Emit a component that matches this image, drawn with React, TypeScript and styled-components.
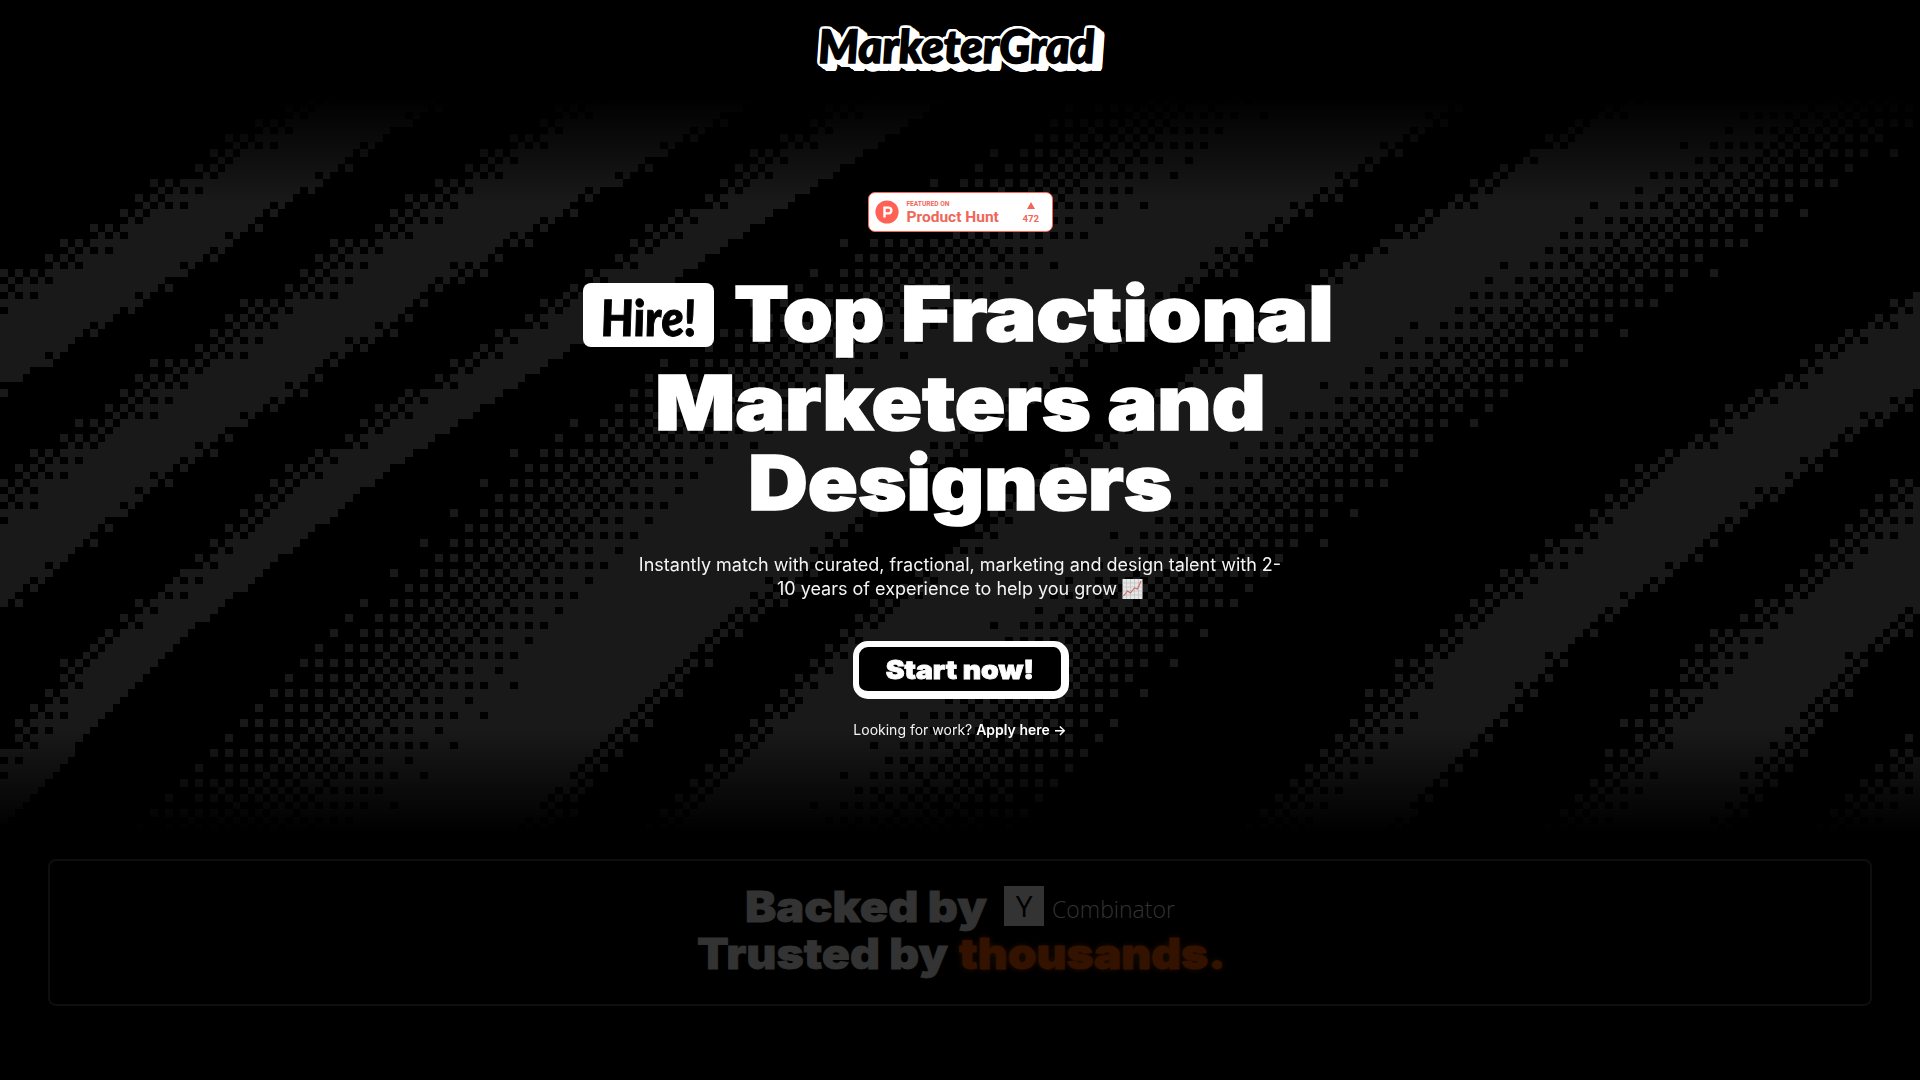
import React, { useLayoutEffect, useRef } from "react";
import styled, { createGlobalStyle } from "styled-components";

const GlobalStyle = createGlobalStyle`
  *, *::before, *::after { box-sizing: border-box; }
  html, body { margin: 0; background: #000; }
  body { color: #fff; font-family: Inter, "Liberation Sans", sans-serif; overflow: hidden; }
`;

/* ---------- dithered backdrop ---------- */

const CELL = 7.5;
const COLS = 256;
const ROWS = 100;
const FIELD_TOP = 88.6;

const BAYER = [
  [0, 8, 2, 10],
  [12, 4, 14, 6],
  [3, 11, 1, 9],
  [15, 7, 13, 5],
];

/* Each band lists, per level, where it starts, becomes solid, stops being solid and ends. */
const LEVELS = [140, 277, 465, 650, 790];
const BANDS: number[][][] = [
  [[217, 288, 361, 395], [-10, 75, 160, 192], [-310, -210, -130, -105], [-600, -500, -420, -390], [-800, -700, -620, -600]],
  [[493, 563, 667, 702], [268, 365, 430, 480], [2, 85, 165, 196], [-200, -130, -65, -35], [-400, -350, -280, -240]],
  [[765, 833, 884, 884], [572, 625, 676, 676], [285, 345, 394, 394], [73, 120, 168, 168], [-50, 5, 36, 36]],
  [[990, 1245, 1382, 1425], [780, 1052, 1171, 1232], [480, 738, 900, 955], [290, 555, 677, 729], [140, 428, 540, 598]],
  [[1533, 1585, 1680, 1925], [1306, 1355, 1465, 1720], [1040, 1092, 1195, 1427], [811, 860, 945, 1200], [678, 728, 808, 1080]],
  [[2150, 2200, 2290, 2330], [1920, 1970, 2060, 2110], [1635, 1687, 1787, 1826], [1395, 1470, 1545, 1578], [1262, 1360, 1415, 1450]],
  [[2400, 2500, 2600, 2650], [2200, 2300, 2400, 2450], [1910, 1985, 2070, 2110], [1688, 1760, 1843, 1898], [1558, 1648, 1725, 1775]],
  [[2700, 2800, 2900, 2950], [2500, 2600, 2700, 2750], [2200, 2280, 2370, 2400], [1995, 2060, 2140, 2180], [1846, 1920, 2010, 2050]],
];

function bandAt(band: number[][], y: number): number[] {
  let i = 0;
  while (i < LEVELS.length - 2 && y > LEVELS[i + 1]) i += 1;
  const t = (y - LEVELS[i]) / (LEVELS[i + 1] - LEVELS[i]);
  return band[i].map((v, k) => v + (band[i + 1][k] - v) * t);
}

function density(x: number, edges: number[]): number {
  const [a, b, c, d] = edges;
  if (x <= a || x >= d) return 0;
  if (x < b) return (x - a) / (b - a);
  if (x > c) return (d - x) / (d - c);
  return 1;
}

const Backdrop = styled.canvas`
  position: absolute;
  top: -7.4px;
  left: 0;
  width: 1920px;
  height: 750px;
  image-rendering: pixelated;
  mask-image: linear-gradient(to bottom, transparent 8px, #000 112px, #000 640px, transparent 744px);
`;

function DitherField() {
  const ref = useRef<HTMLCanvasElement>(null);
  useLayoutEffect(() => {
    const ctx = ref.current?.getContext("2d");
    if (!ctx) return;
    ctx.clearRect(0, 0, COLS, ROWS);
    ctx.fillStyle = "#191919";
    for (let r = 0; r < ROWS; r += 1) {
      const y = FIELD_TOP + (r + 0.5) * CELL;
      const edges = BANDS.map((b) => bandAt(b, y));
      for (let c = 0; c < COLS; c += 1) {
        const x = (c + 0.5) * CELL;
        const v = Math.max(...edges.map((e) => density(x, e)));
        if (v > (BAYER[r % 4][c % 4] + 0.5) / 16) ctx.fillRect(c, r, 1, 1);
      }
    }
  }, []);
  return <Backdrop ref={ref} width={COLS} height={ROWS} />;
}

/* ---------- header ---------- */

const Page = styled.div`
  width: 1920px;
  height: 1080px;
  background: #000;
  display: flex;
  flex-direction: column;
  overflow: hidden;
`;

const Header = styled.header`
  height: 96px;
  display: flex;
  justify-content: center;
  align-items: flex-start;
  padding: 18px 8px 0 0;
`;

const ring = Array.from({ length: 20 }, (_, i) => {
  const a = (i / 20) * Math.PI * 2;
  return [Math.cos(a) * 3.2, Math.sin(a) * 3.2];
});
const extrusion = [0, 1, 2, 3, 4, 5, 6, 7]
  .flatMap((s) => ring.map(([x, y]) => `${(x + s).toFixed(1)}px ${(y + s * 0.75).toFixed(1)}px 0 #fff`))
  .join(", ");

const Wordmark = styled.div`
  font-family: Lato, "Open Sans", sans-serif;
  font-weight: 900;
  font-style: italic;
  font-size: 46px;
  line-height: 56px;
  letter-spacing: 0;
  color: #000;
  -webkit-text-stroke: 1.6px #000;
  text-shadow: ${extrusion};
  white-space: nowrap;
  transform: skewX(3deg);
`;

/* ---------- hero ---------- */

const Hero = styled.main`
  position: relative;
  height: 763px;
  display: flex;
  flex-direction: column;
  align-items: center;
`;

const HuntBadge = styled.a`
  position: relative;
  margin-top: 96px;
  width: 185px;
  height: 40px;
  padding: 0 0 0 6px;
  display: flex;
  align-items: center;
  border: 1px solid #ff6154;
  border-radius: 7px;
  background: #fff;
  color: #f0665a;
  font-family: Roboto, Inter, sans-serif;
  font-weight: 700;
  svg { flex: none; }
`;

const HuntText = styled.div`
  margin: 1px 0 0 8px;
  width: 116px;
  flex: none;
  display: flex;
  flex-direction: column;
`;

const Featured = styled.span`
  font-size: 6.6px;
  line-height: 8px;
  font-weight: 700;
  white-space: nowrap;
`;

const HuntName = styled.span`
  font-size: 15.5px;
  line-height: 18px;
  white-space: nowrap;
`;

const Votes = styled.div`
  display: flex;
  flex-direction: column;
  align-items: center;
  gap: 4px;
  margin-top: 3px;
  font-size: 9.6px;
  line-height: 12px;
`;

const Title = styled.h1`
  position: relative;
  margin: 51px 0 0;
  display: flex;
  flex-direction: column;
  align-items: center;
  font-weight: 900;
  font-size: 76px;
  line-height: 80px;
  -webkit-text-stroke: 1.6px #fff;
`;

const FirstLine = styled.span`
  display: flex;
  align-items: flex-start;
  height: 79px;
  width: 754px;
`;

const HireTag = styled.span`
  flex: none;
  width: 131px;
  height: 64px;
  margin-right: 20px;
  display: flex;
  justify-content: center;
  align-items: center;
  border-radius: 8px;
  background: #fff;
  color: #000;
  font-family: Lato, "Open Sans", sans-serif;
  font-style: italic;
  font-size: 50px;
  line-height: 64px;
  -webkit-text-stroke: 1px #000;
`;

const HireWord = styled.span`
  display: block;
  padding: 4px 2px 0 0;
  transform: scaleX(0.92) skewX(5deg);
`;

const Line = styled.span<{ $stretch: number }>`
  display: block;
  white-space: nowrap;
  transform: scaleX(${(p) => p.$stretch});
`;

const Word = styled(Line)<{ $width: number }>`
  flex: none;
  width: ${(p) => p.$width}px;
  margin-top: -10px;
  transform-origin: left;
`;

const Lead = styled.p`
  position: relative;
  margin: 31px 0 0;
  width: 648px;
  font-size: 18px;
  line-height: 24px;
  text-align: center;
  color: #f4f4f4;
`;

const ChartGlyph = styled.svg`
  width: 21px;
  height: 20px;
  vertical-align: -4px;
`;

const StartButton = styled.button`
  position: relative;
  margin: 40px 0 0 2px;
  width: 216px;
  height: 58px;
  padding: 0;
  border: solid #fff;
  border-width: 6px 8px 8px 6px;
  border-radius: 15px;
  background: #000;
  color: #fff;
  font-family: Inter, sans-serif;
  font-weight: 900;
  font-size: 25.5px;
  line-height: 46px;
  white-space: nowrap;
  display: flex;
  justify-content: center;
  -webkit-text-stroke: 0.8px #fff;
`;

const Apply = styled.p`
  position: relative;
  margin: 21px 0 0;
  font-size: 14px;
  line-height: 20px;
  color: #f4f4f4;
  a { color: #fff; font-weight: 600; }
`;

/* ---------- backers ---------- */

const Backers = styled.section`
  margin: 0 48px;
  height: 147px;
  border: 2px solid #0e0e0e;
  border-radius: 8px;
  display: flex;
  flex-direction: column;
  align-items: center;
  padding-top: 22px;
  color: #333;
  font-weight: 900;
  font-size: 42px;
  line-height: 46px;
`;

const BackersRow = styled.div`
  display: flex;
  align-items: center;
  height: 47px;
  white-space: nowrap;
`;

const Phrase = styled.span<{ $width: number; $stretch: number }>`
  width: ${(p) => p.$width}px;
  transform: scaleX(${(p) => p.$stretch});
  transform-origin: left;
  -webkit-text-stroke: 0.8px currentColor;
`;

const Combinator = styled.span`
  display: flex;
  align-items: center;
  gap: 8px;
  margin-top: -2px;
  font-family: "Open Sans", "Noto Sans", sans-serif;
  font-weight: 300;
  font-size: 23px;
`;

const CombinatorName = styled.span`
  padding-top: 6px;
`;

const YSquare = styled.span`
  width: 40px;
  height: 40px;
  background: #333;
  color: #000;
  display: flex;
  align-items: center;
  justify-content: center;
  font-weight: 400;
  font-size: 30px;
  line-height: 40px;
`;

const Thousands = styled(Phrase)`
  color: #331300;
  text-shadow: 0 0 6px #2a1000;
`;

export default function App() {
  return (
    <Page>
      <GlobalStyle />
      <Header>
        <Wordmark>MarketerGrad</Wordmark>
      </Header>
      <Hero>
        <DitherField />
        <HuntBadge>
          <svg width="24" height="24" viewBox="0 0 24 24">
            <circle cx="12" cy="12" r="11.6" fill="#ff6154" />
            <path d="M9.500 17.500V7.600h4a2.900 2.900 0 0 1 0 5.800H9.500" fill="none" stroke="#fff" strokeWidth="2.400" />
          </svg>
          <HuntText>
            <Featured>FEATURED ON</Featured>
            <HuntName>Product Hunt</HuntName>
          </HuntText>
          <Votes>
            <svg width="8" height="7" viewBox="0 0 8 7">
              <path d="M4 0 8 7H0z" fill="#f0665a" />
            </svg>
            472
          </Votes>
        </HuntBadge>
        <Title>
          <FirstLine>
            <HireTag>
              <HireWord>Hire!</HireWord>
            </HireTag>
            <Word $stretch={1.053} $width={167}>Top</Word>
            <Word $stretch={1.129} $width={400}>Fractional</Word>
          </FirstLine>
          <Line $stretch={1.1}>Marketers and</Line>
          <Line $stretch={1.086}>Designers</Line>
        </Title>
        <Lead>
          Instantly match with curated, fractional, marketing and design talent with 2-
          <br />
          10 years of experience to help you grow{" "}
          <ChartGlyph viewBox="0 0 20 20">
            <rect width="20" height="20" fill="#e6e6e6" />
            <path d="M4 0v20M8 0v20M12 0v20M16 0v20M0 4h20M0 8h20M0 12h20M0 16h20" stroke="#b4c0bd" strokeWidth="0.7" />
            <path d="M1 17l4-5 3 2 4-5 3 1 3.500-8" fill="none" stroke="#d86a6a" strokeWidth="1.2" />
          </ChartGlyph>
        </Lead>
        <StartButton>
          <Line $stretch={1.11}>Start now!</Line>
        </StartButton>
        <Apply>
          Looking for work? <a>Apply here →</a>
        </Apply>
      </Hero>
      <Backers>
        <BackersRow>
          <Phrase $width={259} $stretch={1.115}>Backed by</Phrase>
          <Combinator>
            <YSquare>Y</YSquare>
            <CombinatorName>Combinator</CombinatorName>
          </Combinator>
        </BackersRow>
        <BackersRow>
          <Phrase $width={262} $stretch={1.105}>Trusted by</Phrase>
          <Thousands $width={264} $stretch={1.1}>thousands.</Thousands>
        </BackersRow>
      </Backers>
    </Page>
  );
}
